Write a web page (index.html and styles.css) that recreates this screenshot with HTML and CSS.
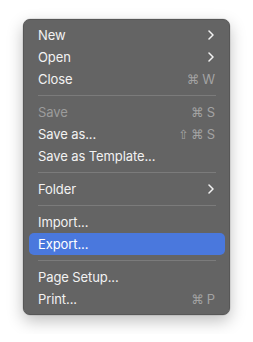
FILE: index.html
```html
<!DOCTYPE html>
<html>
<head>
    <meta charset="UTF-8">
    <meta name="viewport" content="width=device-width, initial-scale=1.0">
    <title>File Menu</title>
    <link rel="stylesheet" href="styles.css">
</head>
<body>
    <div class="menu">
        <div class="item"><span class="label">New</span><svg class="chevron" viewBox="0 0 6 10"><path d="M1 1 L5 5 L1 9"/></svg></div>
        <div class="item"><span class="label">Open</span><svg class="chevron" viewBox="0 0 6 10"><path d="M1 1 L5 5 L1 9"/></svg></div>
        <div class="item"><span class="label">Close</span><span class="keys"><span class="sym">⌘</span>W</span></div>
        <div class="sep"></div>
        <div class="item disabled"><span class="label">Save</span><span class="keys"><span class="sym">⌘</span>S</span></div>
        <div class="item"><span class="label">Save as...</span><span class="keys"><span class="sym">⇧</span><span class="sym">⌘</span>S</span></div>
        <div class="item"><span class="label">Save as Template...</span></div>
        <div class="sep"></div>
        <div class="item"><span class="label">Folder</span><svg class="chevron" viewBox="0 0 6 10"><path d="M1 1 L5 5 L1 9"/></svg></div>
        <div class="sep"></div>
        <div class="item"><span class="label">Import...</span></div>
        <div class="item active"><span class="label">Export...</span></div>
        <div class="sep"></div>
        <div class="item"><span class="label">Page Setup...</span></div>
        <div class="item"><span class="label">Print...</span><span class="keys"><span class="sym">⌘</span>P</span></div>
    </div>
</body>
</html>
```

FILE: styles.css
```css
* {
    box-sizing: border-box;
    margin: 0;
    padding: 0;
}

body {
    background: #ffffff;
    padding: 19px 23px;
    font-family: Inter, 'Noto Sans', 'DejaVu Sans', sans-serif;
}

.menu {
    width: 207px;
    background: #646464;
    border: 1px solid #575757;
    border-radius: 7px;
    padding: 4px 4px 4px 5px;
    box-shadow: 0 0 0 0.5px rgba(0,0,0,0.15), 0 6px 16px rgba(0,0,0,0.25);
}

.item {
    height: 22px;
    display: flex;
    align-items: center;
    justify-content: space-between;
    padding: 0 10px 0 9px;
    border-radius: 5px;
    color: #f2f2f2;
    font-size: 13px;
    letter-spacing: -0.1px;
}

.item.disabled {
    color: #9c9c9c;
}

.item.active {
    background: #4a78dd;
    color: #ffffff;
}

.keys {
    color: #a3a3a3;
    display: flex;
    align-items: center;
    gap: 3px;
    font-size: 13px;
}

.sym {
    font-family: 'DejaVu Sans', sans-serif;
    font-size: 12.5px;
}

.chevron {
    width: 6px;
    height: 10px;
    margin-right: 1px;
    fill: none;
    stroke: #f2f2f2;
    stroke-width: 1.5;
    stroke-linecap: round;
    stroke-linejoin: round;
}

.sep {
    height: 11px;
    display: flex;
    align-items: center;
    padding: 0 9px 0 9px;
}

.sep::after {
    content: '';
    flex: 1;
    height: 1px;
    background: #7b7b7b;
}
```
